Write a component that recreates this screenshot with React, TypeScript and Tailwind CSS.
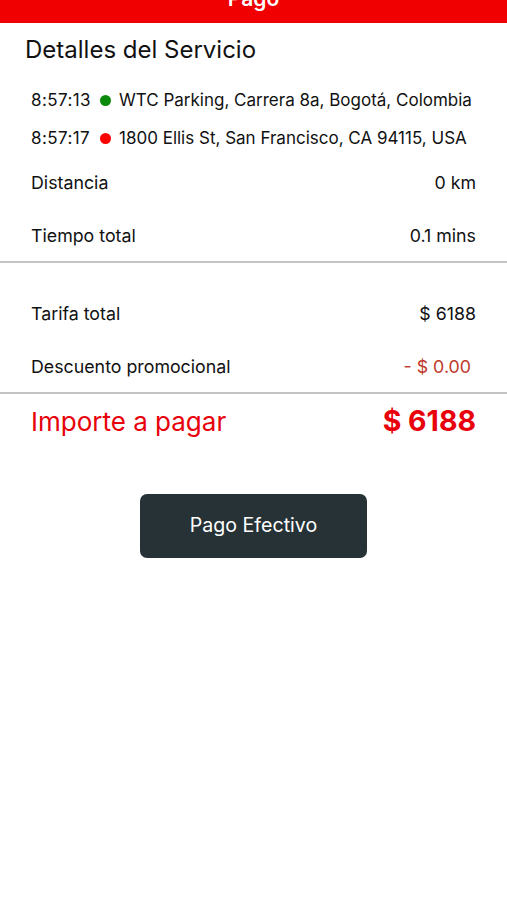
const font = { fontFamily: "Inter, 'Noto Sans', sans-serif" };

function Row({
  label,
  value,
  valueClass = "text-[#111]",
  pr = "pr-[31px]",
}: {
  label: string;
  value: string;
  valueClass?: string;
  pr?: string;
}) {
  return (
    <div className={"flex items-center justify-between h-[53px] pl-[31px] " + pr}>
      <span className="text-[17.8px] text-[#111]">{label}</span>
      <span className={"text-[17.8px] " + valueClass}>{value}</span>
    </div>
  );
}

function Stop({ time, color, address }: { time: string; color: string; address: string }) {
  return (
    <div className="flex items-center h-[37.5px] text-[17px] text-[#111]">
      <span className="w-[62px] tracking-[0.4px]">{time}</span>
      <span className={"w-[11px] h-[11px] rounded-full ml-[7px] mr-[8px] " + color} />
      <span>{address}</span>
    </div>
  );
}

export default function App() {
  return (
    <div className="w-[507px] h-[900px] bg-white overflow-hidden" style={font}>
      <div className="h-[23px] bg-[#f00000] overflow-hidden flex justify-center">
        <span className="text-white text-[21px] font-semibold leading-none -mt-[12px]">
          Pago
        </span>
      </div>

      <h1 className="text-[24px] text-[#111] pl-[25px] mt-[13px] leading-[28px]">
        Detalles del Servicio
      </h1>

      <div className="mt-[18px] pl-[31px] flex flex-col">
        <Stop time="8:57:13" color="bg-[#0a8a0a]" address="WTC Parking, Carrera 8a, Bogotá, Colombia" />
        <Stop time="8:57:17" color="bg-[#ff0000]" address="1800 Ellis St, San Francisco, CA 94115, USA" />
      </div>

      <div>
        <Row label="Distancia" value="0 km" />
        <Row label="Tiempo total" value="0.1 mins" />
      </div>

      <div className="h-[2px] bg-[#c4c4c4] -mt-[2px]" />

      <div className="pt-[25px]">
        <Row label="Tarifa total" value="$ 6188" />
        <Row
          label="Descuento promocional"
          value="- $ 0.00"
          valueClass="text-[#c0392b]"
          pr="pr-[36px]"
        />
      </div>

      <div className="h-[2px] bg-[#c4c4c4] -mt-[2px]" />

      <div className="flex items-center justify-between h-[54px] pl-[31px] pr-[31px] text-[#e8000a]">
        <span className="text-[26px]">Importe a pagar</span>
        <span className="text-[28.5px] font-bold">$ 6188</span>
      </div>

      <div className="flex justify-center mt-[46px]">
        <button className="w-[227px] h-[64px] rounded-[7px] bg-[#263236] text-white text-[19.6px]">
          Pago Efectivo
        </button>
      </div>
    </div>
  );
}
